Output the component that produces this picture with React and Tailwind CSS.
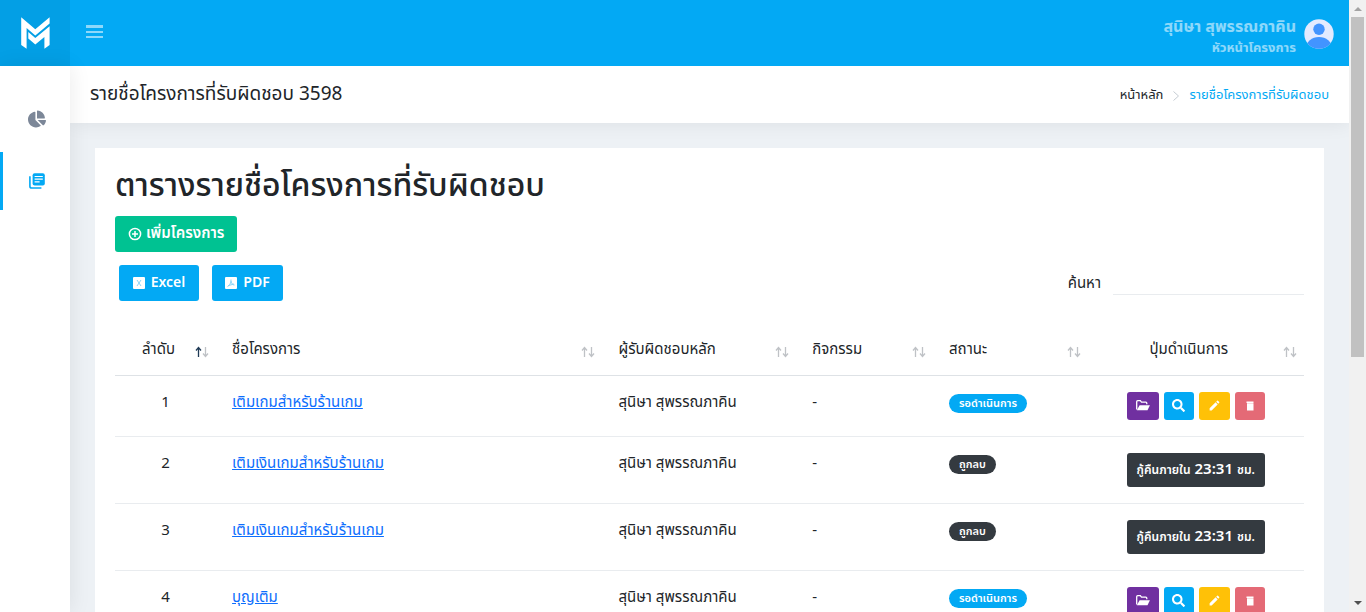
import { FaChartPie, FaSearch } from "react-icons/fa";
import { MdEdit } from "react-icons/md";

const rows = [
  { id: 1, name: "เติมเกมสำหรับร้านเกม", removed: false },
  { id: 2, name: "เติมเงินเกมสำหรับร้านเกม", removed: true },
  { id: 3, name: "เติมเงินเกมสำหรับร้านเกม", removed: true },
  { id: 4, name: "บุญเติม", removed: false },
];

const columns = [
  { label: "ลำดับ", width: "w-[8.5%]", center: true, sorted: true },
  { label: "ชื่อโครงการ", width: "w-[32.5%]" },
  { label: "ผู้รับผิดชอบหลัก", width: "w-[16.3%]" },
  { label: "กิจกรรม", width: "w-[11.5%]" },
  { label: "สถานะ", width: "w-[13%]" },
  { label: "ปุ่มดำเนินการ", width: "w-[18.2%]", center: true },
];

function Logo() {
  return (
    <svg viewBox="0 0 29 32" className="h-8 w-[29px]" fill="#fff" aria-hidden="true">
      <path d="M0.2 0.3 14.3 12.3 28.6 0.3V6.6L14.3 18.6 5.6 11V31.7L0.2 28Z" />
      <path d="M7.3 14.9 14.3 20.9 28.6 9.2V28L23.4 31.7V20L14.3 27.4 7.3 21.4Z" />
    </svg>
  );
}

function Avatar() {
  return (
    <svg viewBox="0 0 30 30" className="size-[30px]" role="img" aria-label="โปรไฟล์">
      <defs>
        <clipPath id="face"><circle cx="15" cy="15" r="14.7" /></clipPath>
      </defs>
      <circle cx="15" cy="15" r="14.7" fill="#e3eaff" />
      <circle cx="15" cy="10.3" r="5.7" fill="#4294ff" />
      <ellipse cx="15" cy="29" rx="13" ry="11" fill="#4294ff" clipPath="url(#face)" />
    </svg>
  );
}

function ProjectsIcon() {
  return (
    <svg viewBox="0 0 16 16" className="size-4" fill="none" aria-hidden="true">
      <rect x="3.6" y="0.2" width="12.2" height="12.2" rx="2" fill="currentColor" />
      <path d="M5.6 3.5h8.2M5.6 6.2h8.2M5.6 8.9h5" stroke="#fff" strokeWidth="1.2" />
      <path d="M0.9 3.3V13.2Q0.9 15 2.7 15H12.4" stroke="currentColor" strokeWidth="1.6" />
    </svg>
  );
}

function PlusCircleIcon() {
  return (
    <svg viewBox="0 0 14 14" className="size-3.5" fill="none" stroke="#fff" strokeWidth="1.5" aria-hidden="true">
      <circle cx="7" cy="7" r="5.6" />
      <path d="M7 4v6M4 7h6" />
    </svg>
  );
}

function FolderIcon() {
  return (
    <svg viewBox="0 0 14 11" className="h-[11px] w-3.5" aria-hidden="true">
      <path d="M0.7 9.5V1.7Q.7.7 1.7.7H4.3L5.5 2.2H9.8Q10.8 2.2 10.8 3.2V4.2" fill="none" stroke="#fff" strokeWidth="1.3" />
      <path d="M3.6 5.2H13.9L11.5 10.3H0.8Z" fill="#fff" />
    </svg>
  );
}

function SortIcon({ sorted }) {
  return (
    <svg viewBox="0 0 14 12" className="h-3 w-3.5" fill="none" aria-hidden="true">
      <path d="M3.5 11V2M1 4.5 3.5 1.5 6 4.5" stroke={sorted ? "#1f3a56" : "#bfc2c6"} strokeWidth="1.3" />
      <path d="M10.5 1V10M8 7.5 10.5 10.5 13 7.5" stroke="#bfc2c6" strokeWidth="1.3" />
    </svg>
  );
}

function Actions({ removed }) {
  if (removed) {
    return (
      <button className="inline-flex h-[34px] w-[138px] items-center justify-center gap-1 rounded-[3px] bg-[#343a40] text-xs font-semibold whitespace-nowrap text-white">
        กู้คืนภายใน <span className="text-[15px]">23:31</span> ชม.
      </button>
    );
  }
  const base = "flex h-7 items-center justify-center rounded-[3px] text-white";
  return (
    <div className="flex justify-center gap-[5px]">
      <button aria-label="เปิด" className={`${base} w-8 bg-[#7030a0]`}><FolderIcon /></button>
      <button aria-label="ดู" className={`${base} w-[30px] bg-[#03a9f4]`}><FaSearch size={13} /></button>
      <button aria-label="แก้ไข" className={`${base} w-[31px] bg-[#ffc107]`}><MdEdit size={13} /></button>
      <button aria-label="ลบ" className={`${base} w-[30px] bg-[#e46a76]`}>
        <svg viewBox="0 0 10 10" className="size-2.5" fill="#fff" aria-hidden="true"><path d="M1.5 0.5h7v1.5h-7zM2 2.2h6.5V9.5H2z" /></svg>
      </button>
    </div>
  );
}

export default function App() {
  return (
    <div className="flex h-screen overflow-hidden bg-[#edf1f5] font-['Noto_Sans_Thai','Prompt','Open_Sans',sans-serif] text-[15px] text-[#212529]">
      <div className="flex min-w-0 flex-1 flex-col">
        <header className="z-10 flex h-[66px] shrink-0 bg-[#03a9f4]">
          <a href="#" aria-label="หน้าแรก" className="flex w-[70px] items-center justify-center bg-[#039fe5]"><Logo /></a>
          <button aria-label="เมนู" className="ml-4 flex w-[17px] flex-col justify-center gap-[3px] pb-[3px]">
            <span className="h-[3px] w-full bg-white/55" />
            <span className="h-[2px] w-full bg-white/55" />
            <span className="h-[2px] w-full bg-white/55" />
          </button>
          <div className="ml-auto flex items-center gap-2 pt-px pr-[15px]">
            <div className="pt-1.5 text-right font-bold text-white/55">
              <div className="text-base leading-[22px]">สุนิษา สุพรรณภาคิน</div>
              <div className="text-[13px] leading-5">หัวหน้าโครงการ</div>
            </div>
            <Avatar />
          </div>
        </header>
        <div className="flex min-h-0 flex-1">
          <nav className="z-10 flex w-[70px] shrink-0 flex-col bg-white pt-6 shadow-[1px_0_20px_rgba(0,0,0,0.08)]">
            <a href="#" aria-label="แดชบอร์ด" className="flex h-[58px] items-center pl-7 text-[#7c8798]"><FaChartPie size={18} /></a>
            <a href="#" aria-label="โครงการ" className="mt-1 flex h-[58px] items-center border-l-[3px] border-[#03a9f4] pl-[26px] text-[#03a9f4]"><ProjectsIcon /></a>
          </nav>
          <main className="min-w-0 flex-1">
            <div className="flex h-[57px] items-center justify-between bg-white px-5 pt-0.5 shadow-[1px_0_20px_rgba(0,0,0,0.08)]">
              <h1 className="text-[19px]">รายชื่อโครงการที่รับผิดชอบ 3598</h1>
              <ol className="flex items-center gap-2.5 text-[13px]">
                <li><a href="#">หน้าหลัก</a></li>
                <li><svg viewBox="0 0 6 10" className="h-2.5 w-1.5" fill="none" stroke="#c5ccd3" aria-hidden="true"><path d="M.5.5 5.5 5 .5 9.5" /></svg></li>
                <li className="text-[#03a9f4]">รายชื่อโครงการที่รับผิดชอบ</li>
              </ol>
            </div>
            <section className="m-[25px] bg-white p-5">
              <h2 className="text-[32px] leading-9 font-medium">ตารางรายชื่อโครงการที่รับผิดชอบ</h2>
              <button className="mt-3 flex h-9 items-center gap-1 rounded-[3px] bg-[#00c292] px-[13px] font-semibold text-white">
                <PlusCircleIcon />เพิ่มโครงการ
              </button>
              <div className="mt-[13px] flex items-start justify-between">
                <div className="flex gap-[13px] pl-1 text-sm">
                  <button className="flex h-9 w-20 items-center justify-center gap-1.5 rounded-[3px] bg-[#03a9f4] font-semibold text-white">
                    <svg viewBox="0 0 12 12" className="size-3" aria-hidden="true"><rect width="12" height="12" rx="1" fill="#fff" /><path d="M4 3 8 9M8 3 4 9" stroke="#8ad4f8" /></svg>Excel
                  </button>
                  <button className="flex h-9 w-[71px] items-center justify-center gap-1.5 rounded-[3px] bg-[#03a9f4] font-semibold text-white">
                    <svg viewBox="0 0 12 12" className="size-3" aria-hidden="true"><rect width="12" height="12" rx="1" fill="#fff" /><path d="M6 2.5C6.5 6 4 9 2.5 9.5M6 4C6.5 7 8 8 9.5 8M3 8.7 9 7" stroke="#8ad4f8" fill="none" /></svg>PDF
                  </button>
                </div>
                <label className="flex items-end gap-3">ค้นหา
                  <input type="search" className="h-[30px] w-[191px] border-b border-[#e9ecef] outline-none" />
                </label>
              </div>
              <table className="mt-5 w-full table-fixed border-collapse">
                <thead>
                  <tr className="border-b border-[#dee2e6]">
                    {columns.map((c) => (
                      <th key={c.label} className={`${c.width} relative h-[54px] pt-[18px] pr-[30px] pb-[14px] pl-4 leading-[21px] font-normal ${c.center ? "text-center" : "text-left"}`}>
                        {c.label}
                        <span className="absolute right-[7px] bottom-[17px]"><SortIcon sorted={c.sorted} /></span>
                      </th>
                    ))}
                  </tr>
                </thead>
                <tbody>
                  {rows.map((r) => (
                    <tr key={r.id} className="border-b border-[#e9ecef] align-top leading-[21px]">
                      <td className="p-4 text-center">{r.id}</td>
                      <td className="p-4"><a href="#" className="text-[#0d6efd] underline">{r.name}</a></td>
                      <td className="p-4">สุนิษา สุพรรณภาคิน</td>
                      <td className="p-4">-</td>
                      <td className="p-4">
                        <span className={`mt-0.5 inline-block h-[19px] rounded-full px-2.5 text-[11px] leading-[19px] font-semibold whitespace-nowrap text-white ${r.removed ? "bg-[#343a40]" : "bg-[#03a9f4]"}`}>
                          {r.removed ? "ถูกลบ" : "รอดำเนินการ"}
                        </span>
                      </td>
                      <td className="p-4 text-center leading-none"><Actions removed={r.removed} /></td>
                    </tr>
                  ))}
                </tbody>
              </table>
            </section>
          </main>
        </div>
      </div>
      <div className="flex w-[17px] shrink-0 flex-col items-center bg-[#f1f1f1]" aria-hidden="true">
        <svg viewBox="0 0 17 17" className="size-[17px]"><path d="M5 11h8L9 7z" fill="#a3a3a3" /></svg>
        <div className="h-[340px] w-[13px] bg-[#c1c1c1]" />
        <svg viewBox="0 0 17 17" className="mt-auto size-[17px]"><path d="M5 6h8L9 10z" fill="#505050" /></svg>
      </div>
    </div>
  );
}
